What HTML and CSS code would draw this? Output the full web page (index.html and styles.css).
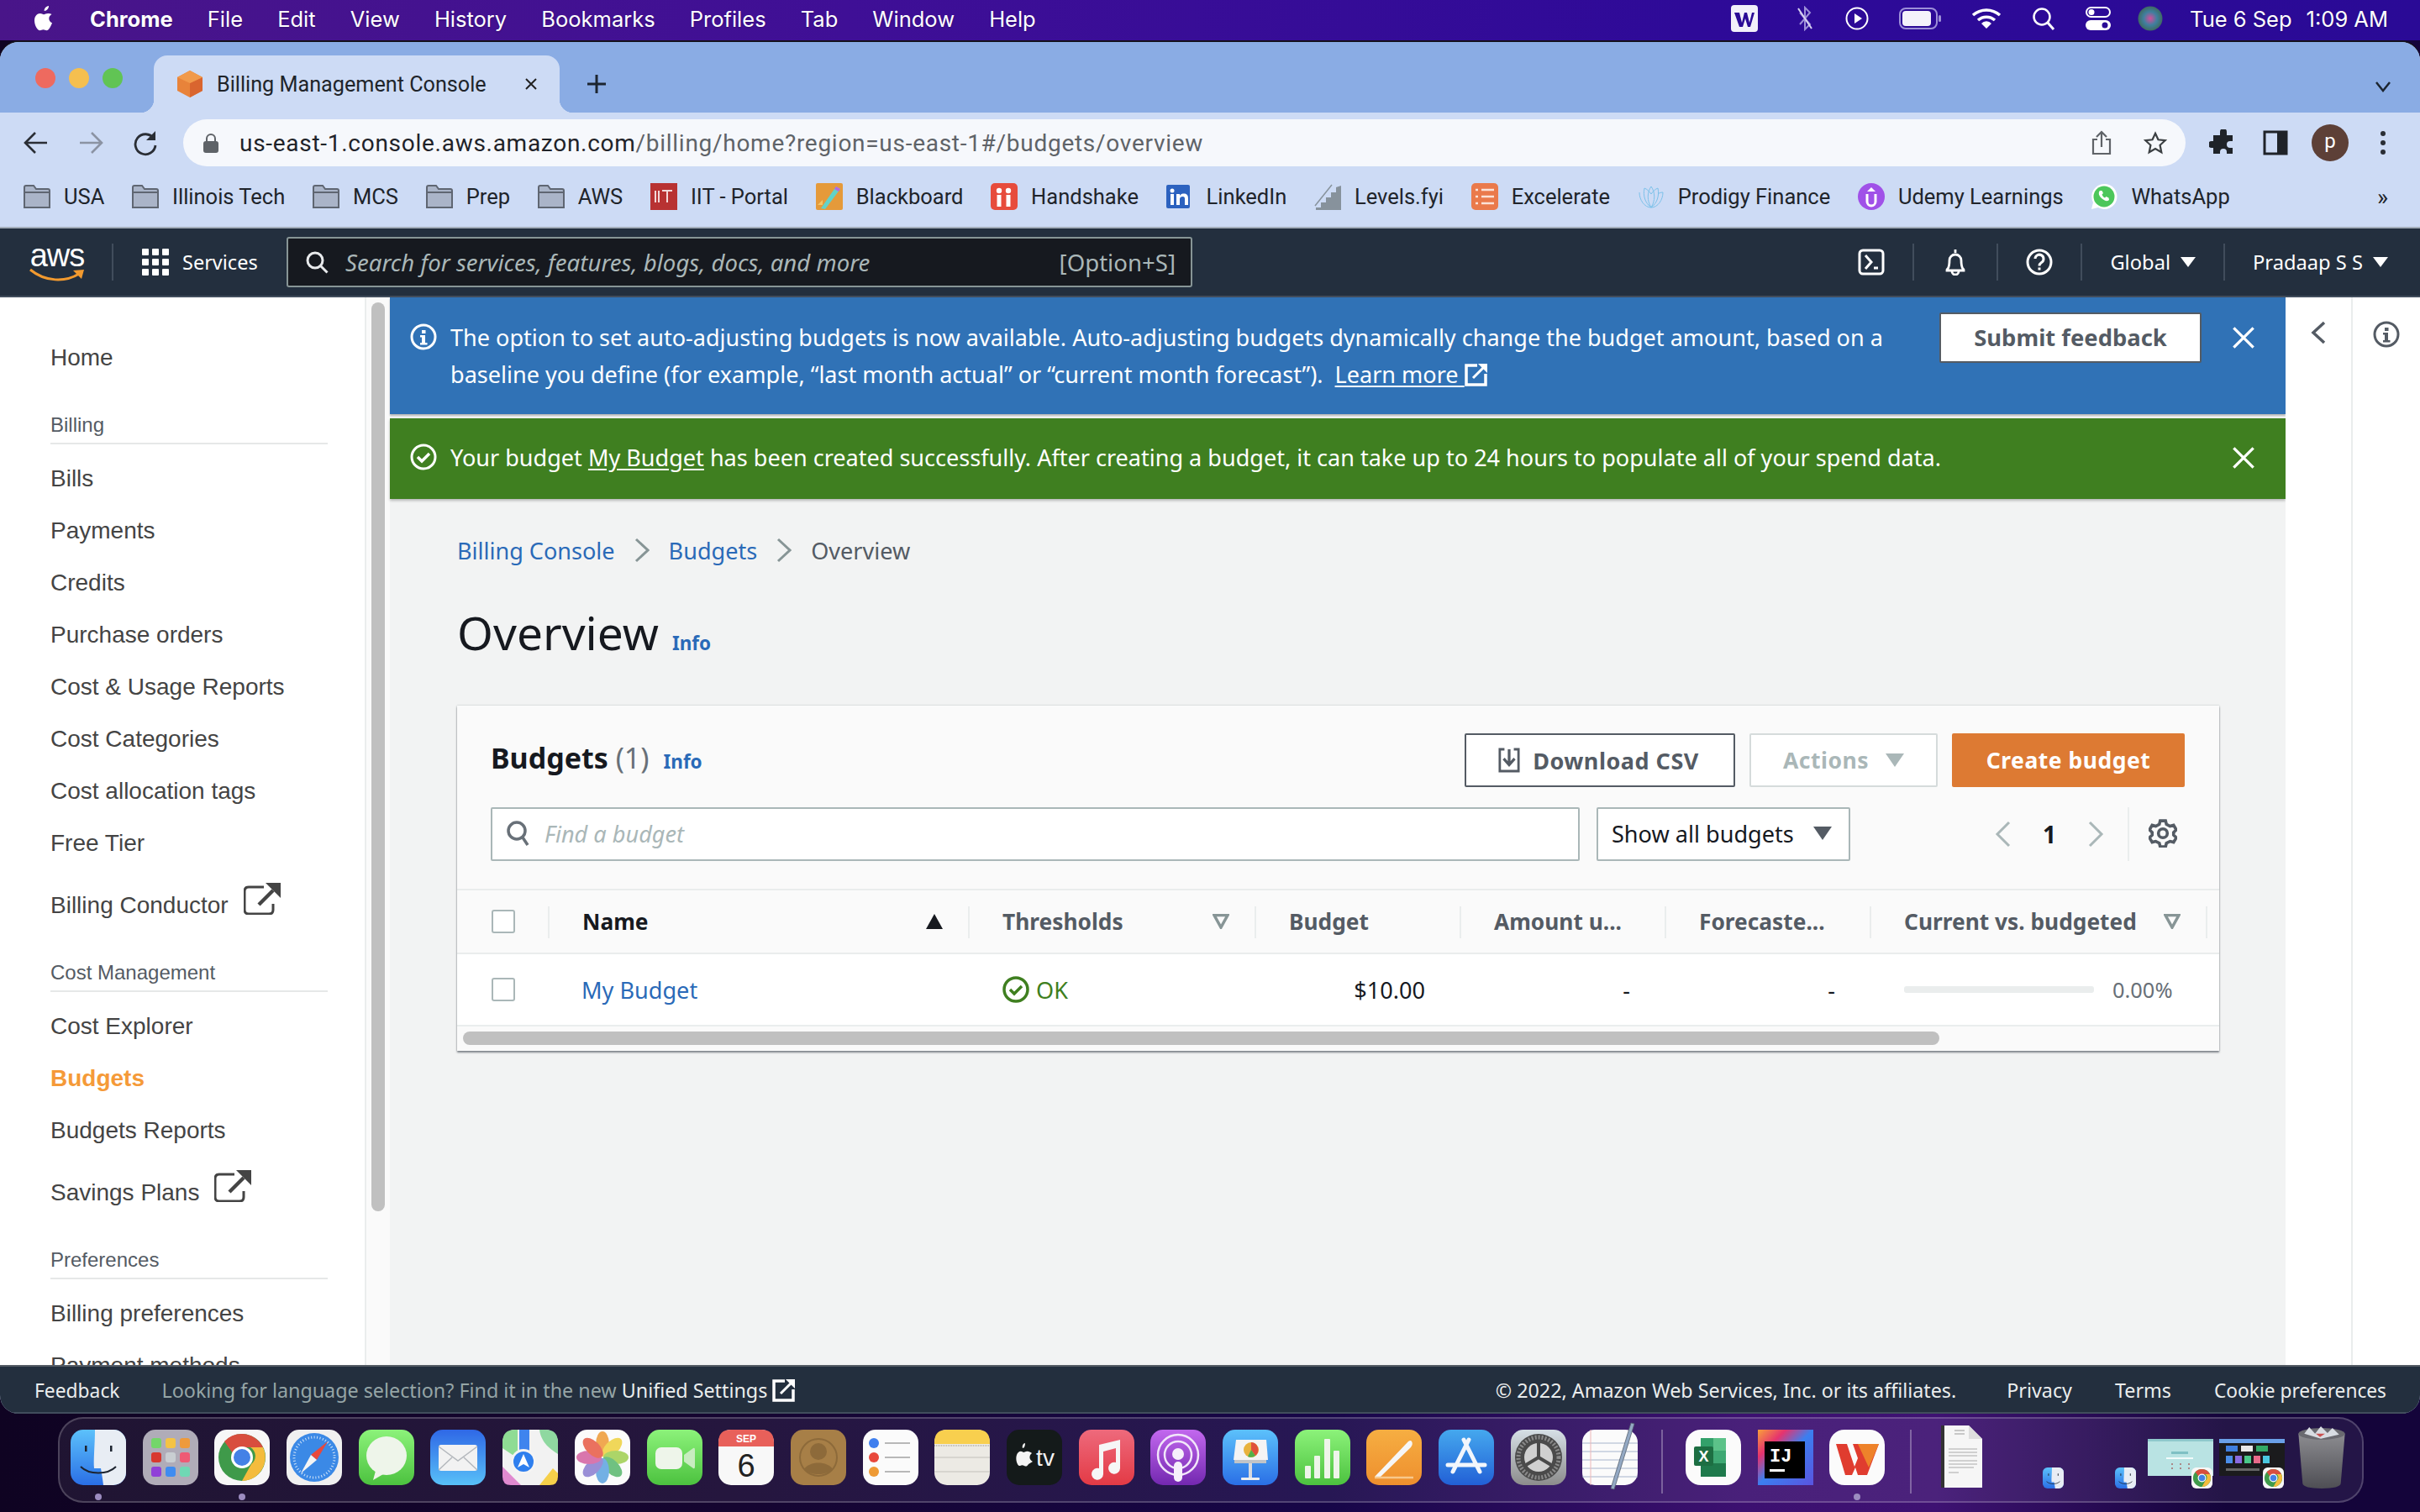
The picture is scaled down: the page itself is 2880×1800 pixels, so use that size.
FILE: index.html
```html
<!DOCTYPE html>
<html lang="en">
<head>
<meta charset="utf-8">
<title>Billing Management Console</title>
<link rel="stylesheet" href="styles.css">
</head>
<body>
<svg class="defs" aria-hidden="true">
  <defs>
    <linearGradient id="gBlue" x1="0" y1="0" x2="0" y2="1"><stop offset="0" stop-color="#5cc1fb"/><stop offset="1" stop-color="#2a6fe6"/></linearGradient>
    <linearGradient id="gGreen" x1="0" y1="0" x2="0" y2="1"><stop offset="0" stop-color="#8cf27a"/><stop offset="1" stop-color="#4cc23f"/></linearGradient>
    <linearGradient id="gMail" x1="0" y1="0" x2="0" y2="1"><stop offset="0" stop-color="#2f68e6"/><stop offset="1" stop-color="#58c0f8"/></linearGradient>
    <linearGradient id="gMusic" x1="0" y1="0" x2="0" y2="1"><stop offset="0" stop-color="#ee6a7c"/><stop offset="1" stop-color="#e33a45"/></linearGradient>
    <linearGradient id="gPod" x1="0" y1="0" x2="0" y2="1"><stop offset="0" stop-color="#c268ee"/><stop offset="1" stop-color="#7328b0"/></linearGradient>
    <linearGradient id="gPages" x1="0" y1="0" x2="0" y2="1"><stop offset="0" stop-color="#f6ae42"/><stop offset="1" stop-color="#ee8f2e"/></linearGradient>
    <linearGradient id="gStore" x1="0" y1="0" x2="0" y2="1"><stop offset="0" stop-color="#45a8ee"/><stop offset="1" stop-color="#2260d6"/></linearGradient>
    <linearGradient id="gGear" x1="0" y1="0" x2="0" y2="1"><stop offset="0" stop-color="#d6dfe6"/><stop offset="1" stop-color="#8c8c8c"/></linearGradient>
    <linearGradient id="gTrash" x1="0" y1="0" x2="0" y2="1"><stop offset="0" stop-color="#8c8c90"/><stop offset="1" stop-color="#4e4e54"/></linearGradient>
    <linearGradient id="gIj" x1="0" y1="0" x2="1" y2="1"><stop offset="0" stop-color="#f9a03a"/><stop offset=".25" stop-color="#e6336e"/><stop offset=".5" stop-color="#3b7ff0"/><stop offset="1" stop-color="#5a54e0"/></linearGradient>
    <symbol id="fold" viewBox="0 0 32 28"><path d="M1 27V3q0-2 2-2h9l3 4h14q2 0 2 2v20z" fill="#aab4c8" stroke="#5f6672" stroke-width="2"/><path d="M1 9h30" stroke="#5f6672" stroke-width="2"/></symbol>
    <symbol id="extbig" viewBox="0 0 44 38"><path d="M24 5H6q-5 0-5 5v22q0 5 5 5h24q5 0 5-5v-7" fill="none" stroke="#444" stroke-width="3"/><path d="M18 26L35 9" stroke="#444" stroke-width="4.500"/><path d="M26 0h18v18z" fill="#444"/></symbol>
    <symbol id="finder" viewBox="0 0 66 66">
      <rect width="66" height="66" rx="15" fill="url(#gBlue)"/>
      <path d="M29 0h22a15 15 0 0 1 15 15v36a15 15 0 0 1-15 15H39c-1-8-2-14-3-20h-8c-1-10 1-28 1-46z" fill="#e8edf4"/>
      <path d="M12 44c10 10 32 10 42 0" fill="none" stroke="#1d2430" stroke-width="2"/>
      <rect x="17" y="19" width="2.500" height="7" fill="#1d2430"/><rect x="47" y="19" width="2.500" height="7" fill="#1d2430"/>
    </symbol>
    <symbol id="chrome" viewBox="0 0 66 66">
      <rect width="66" height="66" rx="15" fill="#f7f7f7"/>
      <circle cx="33" cy="33" r="28" fill="#3f9a4a"/>
      <path d="M33 5a28 28 0 0 1 25 16H33a12 12 0 0 0-11 7L12 14A28 28 0 0 1 33 5z" fill="#d84e3e"/>
      <path d="M58 21a28 28 0 0 1-25 40l11-20a12 12 0 0 0-1-20z" fill="#f4bc3d"/>
      <circle cx="33" cy="33" r="13" fill="#fff"/><circle cx="33" cy="33" r="10" fill="#4481e6"/>
    </symbol>
  </defs>
</svg>

<header class="menubar">
  <nav class="menu-left">
    <svg class="apple" viewBox="0 0 26 32"><path fill="#fff" d="M18 1c.3 2.500-2.200 6-5.300 6-.4-2.700 2.400-5.800 5.300-6zM21.500 11c-2.500 1.500-3.200 3.300-3.200 5 0 2.500 1.500 4.500 3.700 5.300-1.300 4-4 9-6.500 9-1.500 0-2.300-1-4-1s-2.600 1-4 1C4.500 30.300 1 24 1 18.500 1 13 4.300 10 7.700 10c1.800 0 3.200 1.200 4.400 1.200S15 10 17 10c1.700 0 3.300.3 4.500 1z"/></svg>
    <b class="menu-app">Chrome</b>
    <span>File</span><span>Edit</span><span>View</span><span>History</span><span>Bookmarks</span><span>Profiles</span><span>Tab</span><span>Window</span><span>Help</span>
  </nav>
  <div class="status">
    <svg class="st-wps" viewBox="0 0 32 32"><rect width="32" height="32" rx="4" fill="#f2f0fa"/><path d="M4 9h6l3 12 3-12h3l3 12 3-12h3l-5 17h-3l-3-10-3 10h-4z" fill="#2a0a96"/></svg>
    <svg class="st-bt" viewBox="0 0 24 30"><path d="M6 8l12 14-6 6V2l6 6L6 22" fill="none" stroke="#9d8fd8" stroke-width="2"/><path d="M4 3l16 24" stroke="#d8d2f0" stroke-width="2"/></svg>
    <svg class="st-play" viewBox="0 0 28 28"><circle cx="14" cy="14" r="12.500" fill="none" stroke="#fff" stroke-width="2"/><path d="M11 8l9 6-9 6z" fill="#fff"/></svg>
    <svg class="st-batt" viewBox="0 0 50 26"><rect x="1" y="1" width="44" height="24" rx="7" fill="none" stroke="#9d8fd8" stroke-width="2"/><rect x="4" y="4" width="34" height="18" rx="4" fill="#f4f2fb"/><rect x="47" y="9" width="3" height="8" rx="1.500" fill="#9d8fd8"/></svg>
    <svg class="st-wifi" viewBox="0 0 36 26"><path d="M2 9a24 24 0 0 1 32 0M8 15a15 15 0 0 1 20 0" fill="none" stroke="#fff" stroke-width="3.500"/><path d="M12 19a8 8 0 0 1 12 0l-6 6z" fill="#fff"/></svg>
    <svg class="st-search" viewBox="0 0 28 28"><circle cx="12" cy="12" r="9.500" fill="none" stroke="#fff" stroke-width="2.500"/><path d="M19 19l7 8" stroke="#fff" stroke-width="3"/></svg>
    <svg class="st-ctl" viewBox="0 0 30 28"><rect x="1" y="1" width="28" height="11" rx="5.500" fill="none" stroke="#fff" stroke-width="2"/><circle cx="7" cy="6.500" r="3.500" fill="#fff"/><rect x="0" y="16" width="30" height="12" rx="6" fill="#fff"/><circle cx="23" cy="22" r="3.500" fill="#2a0a96"/></svg>
    <svg class="st-siri" viewBox="0 0 30 30"><defs><radialGradient id="gSiri"><stop offset="0" stop-color="#d44f9a"/><stop offset=".55" stop-color="#3f7f9f"/><stop offset="1" stop-color="#3f6a62"/></radialGradient></defs><circle cx="15" cy="15" r="14.500" fill="url(#gSiri)"/></svg>
    <span class="st-date">Tue 6 Sep</span><span>1:09 AM</span>
  </div>
</header>

<main class="window">
  <div class="tabstrip">
    <div class="lights"><i class="red"></i><i class="yellow"></i><i class="green"></i></div>
    <div class="tab">
      <svg class="favicon" viewBox="0 0 32 32"><path d="M16 0l15 8v16l-15 8L1 24V8z" fill="#e8833a"/><path d="M16 15l15-7v16l-15 8z" fill="#d9652f"/><path d="M16 0l15 8-15 7L1 8z" fill="#f19a4b"/></svg>
      <span class="tab-title">Billing Management Console</span>
      <svg class="tab-x" viewBox="0 0 16 16"><path d="M2 2l12 12M14 2L2 14" stroke="#222" stroke-width="2"/></svg>
    </div>
    <svg class="tab-plus" viewBox="0 0 24 24"><path d="M12 1v22M1 12h22" stroke="#1c2530" stroke-width="3"/></svg>
    <svg class="tab-down" viewBox="0 0 20 14"><path d="M2 2l8 10 8-10" fill="none" stroke="#1c2530" stroke-width="2.500"/></svg>
  </div>

  <div class="toolbar">
    <svg class="tool" viewBox="0 0 32 32"><path d="M29 16H4M15 4L3 16l12 12" fill="none" stroke="#2a2e35" stroke-width="2.600"/></svg>
    <svg class="tool" viewBox="0 0 32 32"><path d="M3 16h25M17 4l12 12-12 12" fill="none" stroke="#8b93a3" stroke-width="2.600"/></svg>
    <svg class="tool" viewBox="0 0 32 32"><path d="M26 11a12 12 0 1 0 2 8" fill="none" stroke="#2a2e35" stroke-width="2.800"/><path d="M28 2v11H17z" fill="#2a2e35"/></svg>
    <div class="address">
      <svg class="lock" viewBox="0 0 18 24"><path d="M4 11V7a5 5 0 0 1 10 0v4" fill="none" stroke="#5f6368" stroke-width="2"/><rect y="10" width="18" height="14" rx="3" fill="#5f6368"/></svg>
      <span class="url"><span class="url-host">us-east-1.console.aws.amazon.com</span>/billing/home?region=us-east-1#/budgets/overview</span>
      <svg class="addr-ic share" viewBox="0 0 24 30"><path d="M7 11H2v17h20V11h-5M12 20V2M6 8l6-6 6 6" fill="none" stroke="#5f6368" stroke-width="2.200"/></svg>
      <svg class="addr-ic" viewBox="0 0 30 30"><path d="M15 3l3.700 8 8.800 1-6.500 6 1.800 9-7.800-4.500L7.200 27 9 18l-6.500-6 8.800-1z" fill="none" stroke="#3c4043" stroke-width="2.400"/></svg>
    </div>
    <svg class="tool puzzle" viewBox="0 0 32 32"><path d="M13 3a4 4 0 0 1 8 0v4h7v7h-3a4 4 0 0 0 0 8h3v7h-7v-2a4 4 0 0 0-8 0v2H5v-7H3a4 4 0 0 1 0-8h2V7h8z" fill="#1f2329"/></svg>
    <svg class="tool panel" viewBox="0 0 32 32"><rect x="3" y="3" width="26" height="26" fill="none" stroke="#1f2329" stroke-width="3"/><rect x="18" y="3" width="11" height="26" fill="#1f2329"/></svg>
    <div class="avatar">p</div>
    <svg class="tool dots" viewBox="0 0 32 32"><circle cx="16" cy="5" r="3" fill="#2a2e35"/><circle cx="16" cy="16" r="3" fill="#2a2e35"/><circle cx="16" cy="27" r="3" fill="#2a2e35"/></svg>
  </div>

  <div class="bookmarks">
    <a class="bm"><svg class="folder" viewBox="0 0 32 28"><use href="#fold"/></svg>USA</a>
    <a class="bm"><svg class="folder" viewBox="0 0 32 28"><use href="#fold"/></svg>Illinois Tech</a>
    <a class="bm"><svg class="folder" viewBox="0 0 32 28"><use href="#fold"/></svg>MCS</a>
    <a class="bm"><svg class="folder" viewBox="0 0 32 28"><use href="#fold"/></svg>Prep</a>
    <a class="bm"><svg class="folder" viewBox="0 0 32 28"><use href="#fold"/></svg>AWS</a>
    <a class="bm"><svg class="bi" viewBox="0 0 32 32"><rect width="32" height="32" fill="#b83232"/><path d="M6 9v14M10 9v14M14 9h12M20 9v14" stroke="#f2d8d8" stroke-width="2"/></svg>IIT - Portal</a>
    <a class="bm"><svg class="bi" viewBox="0 0 32 32"><rect width="32" height="32" rx="2" fill="#e59a3a"/><path d="M6 30L24 4l5 3L11 31z" fill="#63d2c8"/><path d="M24 4l5 3-2 3-5-3z" fill="#b56ae0"/><path d="M2 26l6-6v6z" fill="#f3c566"/></svg>Blackboard</a>
    <a class="bm"><svg class="bi" viewBox="0 0 32 32"><rect width="32" height="32" rx="5" fill="#e74c3c"/><circle cx="10" cy="9" r="3.200" fill="#fff"/><circle cx="21" cy="9" r="3.200" fill="#fff"/><rect x="7.500" y="14" width="5" height="14" fill="#fff"/><rect x="18.500" y="14" width="5" height="14" fill="#fff"/></svg>Handshake</a>
    <a class="bm"><svg class="bi" viewBox="0 0 32 32"><rect width="28" height="28" y="2" rx="2" fill="#2c62bf"/><rect x="5" y="13" width="4" height="13" fill="#fff"/><circle cx="7" cy="9" r="2.500" fill="#fff"/><path d="M12 13h4v2c1-2 3-2.500 5-2.500 4 0 5 2.500 5 6V26h-4v-7c0-2-.5-3-2.500-3S16 17 16 19v7h-4z" fill="#fff"/></svg>LinkedIn</a>
    <a class="bm"><svg class="bi" viewBox="0 0 32 32"><path d="M21 2L1 27" stroke="#87929c" stroke-width="1.500"/><path d="M32 3v29H2v-3h6v-6h6v-6h6v-6h6V5z" fill="#87929c"/></svg>Levels.fyi</a>
    <a class="bm"><svg class="bi" viewBox="0 0 32 32"><rect width="32" height="32" rx="5" fill="#ea7a4b"/><path d="M5 8h3M12 8h15M5 16h3M12 16h15M5 24h3M12 24h15" stroke="#fbe3d8" stroke-width="2.500"/></svg>Excelerate</a>
    <a class="bm"><svg class="bi" viewBox="0 0 32 32" fill="none" stroke="#7cc1ea" stroke-width="1"><path d="M16 4c-5 7-5 17 0 25 5-8 5-18 0-25zM8 6c-2 9 1 18 8 23 7-5 10-14 8-23-3 1-6 4-8 7-2-3-5-6-8-7zM2 11c0 9 6 18 14 18s14-9 14-18c-3 0-5 1-6 2"/></svg>Prodigy Finance</a>
    <a class="bm"><svg class="bi" viewBox="0 0 32 32"><circle cx="16" cy="16" r="16" fill="#a051e8"/><path d="M11 13v9a5 5 0 0 0 10 0v-9" fill="none" stroke="#fff" stroke-width="3"/><path d="M16 5l5 5H11z" fill="#fff"/></svg>Udemy Learnings</a>
    <a class="bm"><svg class="bi" viewBox="0 0 32 32"><path d="M16 1a15 15 0 0 0-13 22L1 31l8-2A15 15 0 1 0 16 1z" fill="#fff"/><circle cx="16" cy="16" r="12.500" fill="#4cc75b"/><path d="M11 9c-2 2-1.500 6 2 9s6.500 4.500 9 2l-.5-2.500-3-1.500-1.500 1.500c-2-1-3-2.500-3.500-4l1.500-1.500L13.500 9z" fill="#fff"/></svg>WhatsApp</a>
    <span class="bm-more">»</span>
  </div>

  <div class="awsnav">
    <div class="aws-logo"><span class="aws-word">aws</span>
      <svg class="aws-smile" viewBox="0 0 66 16"><path d="M1 2c18 15 42 15 58 5" fill="none" stroke="#f29a2f" stroke-width="3"/><path d="M52 3l13-1-3 11z" fill="#f29a2f"/></svg>
    </div>
    <i class="nav-sep"></i>
    <div class="services">
      <svg class="grid9" viewBox="0 0 32 32"><g fill="#fff"><rect width="8" height="8" rx="1"/><rect x="12" width="8" height="8" rx="1"/><rect x="24" width="8" height="8" rx="1"/><rect y="12" width="8" height="8" rx="1"/><rect x="12" y="12" width="8" height="8" rx="1"/><rect x="24" y="12" width="8" height="8" rx="1"/><rect y="24" width="8" height="8" rx="1"/><rect x="12" y="24" width="8" height="8" rx="1"/><rect x="24" y="24" width="8" height="8" rx="1"/></g></svg>
      <span>Services</span>
    </div>
    <div class="aws-search">
      <svg class="aws-search-ic" viewBox="0 0 28 28"><circle cx="12" cy="12" r="9" fill="none" stroke="#e8eaec" stroke-width="3"/><path d="M18.500 18.500l8 8" stroke="#e8eaec" stroke-width="3"/></svg>
      <em>Search for services, features, blogs, docs, and more</em>
      <span class="aws-short">[Option+S]</span>
    </div>
    <div class="aws-right">
      <svg class="nav-ic" viewBox="0 0 32 32"><rect x="2" y="2" width="28" height="28" rx="4" fill="none" stroke="#fff" stroke-width="3"/><path d="M9 8l7 8-7 8M19 23h5" fill="none" stroke="#fff" stroke-width="3"/></svg>
      <i class="nav-sep"></i>
      <svg class="nav-ic" viewBox="0 0 32 32"><path d="M16 1v4M7 24c2-3 2-5 2-10a7 7 0 0 1 14 0c0 5 0 7 2 10 0 0 1 .500 1 1v1H6v-1c0-.500 1-1 1-1zM12 27a4 4 0 0 0 8 0" fill="none" stroke="#fff" stroke-width="2.800"/></svg>
      <i class="nav-sep"></i>
      <svg class="nav-ic" viewBox="0 0 32 32"><circle cx="16" cy="16" r="14" fill="none" stroke="#fff" stroke-width="3"/><path d="M11 12a5 5 0 1 1 7.500 4.500c-1.500 1-2.500 2-2.500 4" fill="none" stroke="#fff" stroke-width="3"/><rect x="14.500" y="22.500" width="3" height="3" fill="#fff"/></svg>
      <i class="nav-sep"></i>
      <span class="nav-menu nav-global">Global<i class="caret-w"></i></span>
      <i class="nav-sep"></i>
      <span class="nav-menu nav-user">Pradaap S S<i class="caret-w"></i></span>
    </div>
  </div>

  <div class="body-row">
    <aside class="sidebar">
      <a class="nav-item">Home</a>
      <div class="nav-section">Billing</div>
      <a class="nav-item">Bills</a>
      <a class="nav-item">Payments</a>
      <a class="nav-item">Credits</a>
      <a class="nav-item">Purchase orders</a>
      <a class="nav-item">Cost &amp; Usage Reports</a>
      <a class="nav-item">Cost Categories</a>
      <a class="nav-item">Cost allocation tags</a>
      <a class="nav-item">Free Tier</a>
      <a class="nav-item nav-ext">Billing Conductor <svg class="ext-big" viewBox="0 0 44 38"><use href="#extbig"/></svg></a>
      <div class="nav-section">Cost Management</div>
      <a class="nav-item">Cost Explorer</a>
      <a class="nav-item nav-active">Budgets</a>
      <a class="nav-item">Budgets Reports</a>
      <a class="nav-item nav-ext">Savings Plans <svg class="ext-big" viewBox="0 0 44 38"><use href="#extbig"/></svg></a>
      <div class="nav-section">Preferences</div>
      <a class="nav-item">Billing preferences</a>
      <a class="nav-item">Payment methods</a>
    </aside>
    <div class="side-scroll"><div class="side-thumb"></div></div>

    <section class="content">
      <div class="flash flash-info">
        <svg class="flash-ic" viewBox="0 0 32 32"><circle cx="16" cy="16" r="14" fill="none" stroke="#fff" stroke-width="3"/><rect x="14" y="8" width="4.500" height="4" fill="#fff"/><path d="M12 14h6v9h2.500v2.500h-8.500V23H14v-6.500h-2z" fill="#fff"/></svg>
        <p class="flash-text">The option to set auto-adjusting budgets is now available. Auto-adjusting budgets dynamically change the budget amount, based on a<br>baseline you define (for example, “last month actual” or “current month forecast”). <u class="learn">Learn more </u><svg class="ext-small" viewBox="0 0 28 28"><path d="M15 3H2v23h23V13" fill="none" stroke="#fff" stroke-width="3.500"/><path d="M10 18L22 6" stroke="#fff" stroke-width="3"/><path d="M16 1h11v11z" fill="#fff"/></svg></p>
        <button class="btn-feedback">Submit feedback</button>
        <svg class="flash-x" viewBox="0 0 24 24"><path d="M2 2l20 20M22 2L2 22" stroke="#fff" stroke-width="2.800"/></svg>
      </div>
      <div class="flash flash-ok">
        <svg class="flash-ic" viewBox="0 0 32 32"><circle cx="16" cy="16" r="14" fill="none" stroke="#fff" stroke-width="3"/><path d="M9 16l5 5 9-9" fill="none" stroke="#fff" stroke-width="3.500"/></svg>
        <p class="flash-text">Your budget <u>My Budget</u> has been created successfully. After creating a budget, it can take up to 24 hours to populate all of your spend data.</p>
        <svg class="flash-x" viewBox="0 0 24 24"><path d="M2 2l20 20M22 2L2 22" stroke="#fff" stroke-width="2.800"/></svg>
      </div>

      <div class="page">
        <nav class="crumbs">
          <a>Billing Console</a>
          <svg class="crumb-sep" viewBox="0 0 18 30"><path d="M2 2l14 13L2 28" fill="none" stroke="#879596" stroke-width="3"/></svg>
          <a>Budgets</a>
          <svg class="crumb-sep" viewBox="0 0 18 30"><path d="M2 2l14 13L2 28" fill="none" stroke="#879596" stroke-width="3"/></svg>
          <span>Overview</span>
        </nav>
        <div class="title-row"><h1>Overview</h1><a class="info">Info</a></div>

        <div class="card">
          <div class="card-head">
            <h2>Budgets <span class="count">(1)</span></h2><a class="info">Info</a>
            <div class="actions">
              <button class="btn btn-normal"><svg class="dl" viewBox="0 0 28 32"><path d="M8 2H2v28h24V2h-6" fill="none" stroke="#545b64" stroke-width="3"/><path d="M14 2v18M7 14l7 8 7-8" fill="none" stroke="#545b64" stroke-width="3.500"/></svg>Download CSV</button>
              <button class="btn btn-disabled">Actions<i class="caret caret-dis"></i></button>
              <button class="btn btn-primary">Create budget</button>
            </div>
          </div>
          <div class="card-filter">
            <div class="find"><svg class="find-ic" viewBox="0 0 28 32"><circle cx="13" cy="13" r="10" fill="none" stroke="#687078" stroke-width="3.500"/><path d="M20 21l6 9" stroke="#687078" stroke-width="3.500"/></svg><em>Find a budget</em></div>
            <div class="select">Show all budgets<i class="caret caret-dark"></i></div>
            <div class="pager">
              <svg class="pg" viewBox="0 0 20 32"><path d="M17 2L3 16l14 14" fill="none" stroke="#aab7b8" stroke-width="3"/></svg>
              <b>1</b>
              <svg class="pg" viewBox="0 0 20 32"><path d="M3 2l14 14L3 30" fill="none" stroke="#aab7b8" stroke-width="3"/></svg>
            </div>
            <div class="prefs"><svg class="gear" viewBox="0 0 32 32"><path d="M13 2h6l1 4 4 2 4-1 3 5-3 3v3l3 3-3 5-4-1-4 2-1 4h-6l-1-4-4-2-4 1-3-5 3-3v-3L1 12l3-5 4 1 4-2z" fill="none" stroke="#545b64" stroke-width="3.400"/><circle cx="16" cy="16" r="5" fill="none" stroke="#545b64" stroke-width="3.400"/></svg></div>
          </div>
          <div class="table">
            <div class="tr th">
              <div class="cell"><i class="check"></i></div>
              <div class="cell sep name-h">Name<svg class="sort" viewBox="0 0 20 18"><path d="M10 0l10 18H0z" fill="#16191f"/></svg></div>
              <div class="cell sep">Thresholds<svg class="sort" viewBox="0 0 20 18"><path d="M2 1.500h16L10 16z" fill="none" stroke="#879596" stroke-width="3.500"/></svg></div>
              <div class="cell sep">Budget</div>
              <div class="cell sep">Amount u...</div>
              <div class="cell sep">Forecaste...</div>
              <div class="cell sep">Current vs. budgeted<svg class="sort" viewBox="0 0 20 18"><path d="M2 1.500h16L10 16z" fill="none" stroke="#879596" stroke-width="3.500"/></svg></div>
              <div class="cell sep cell-end"></div>
            </div>
            <div class="tr td">
              <div class="cell"><i class="check"></i></div>
              <div class="cell"><a class="link">My Budget</a></div>
              <div class="cell ok"><svg class="ok-ic" viewBox="0 0 32 32"><circle cx="16" cy="16" r="14" fill="none" stroke="#3f7f20" stroke-width="3.500"/><path d="M9 16l5 5 9-9" fill="none" stroke="#3f7f20" stroke-width="3.500"/></svg>OK</div>
              <div class="cell num">$10.00</div>
              <div class="cell num">-</div>
              <div class="cell num">-</div>
              <div class="cell prog"><i class="bar"></i><span>0.00%</span></div>
              <div class="cell cell-end"></div>
            </div>
          </div>
          <div class="hscroll"><div class="hthumb"></div></div>
        </div>
      </div>
    </section>

    <aside class="rail">
      <div class="rail-col rail-left"><svg class="rail-chev" viewBox="0 0 20 28"><path d="M17 2L4 14l13 12" fill="none" stroke="#545b64" stroke-width="3.500"/></svg></div>
      <div class="rail-col"><svg class="rail-info" viewBox="0 0 32 32"><circle cx="16" cy="16" r="14" fill="none" stroke="#545b64" stroke-width="3"/><rect x="14" y="8" width="4.500" height="4" fill="#545b64"/><path d="M12 14h6v9h2.500v2.500h-8.500V23H14v-6.500h-2z" fill="#545b64"/></svg></div>
    </aside>
  </div>

  <footer class="footer">
    <a class="foot-white foot-feedback">Feedback</a>
    <span class="foot-grey">Looking for language selection? Find it in the new <span class="foot-white">Unified Settings</span></span>
    <svg class="ext-foot" viewBox="0 0 28 28"><path d="M15 3H2v23h23V13" fill="none" stroke="#fff" stroke-width="3.500"/><path d="M10 18L22 6" stroke="#fff" stroke-width="3"/><path d="M16 1h11v11z" fill="#fff"/></svg>
    <span class="foot-white foot-copy">© 2022, Amazon Web Services, Inc. or its affiliates.</span>
    <a class="foot-white foot-privacy">Privacy</a>
    <a class="foot-white foot-terms">Terms</a>
    <a class="foot-white foot-cookie">Cookie preferences</a>
  </footer>
</main>

<div class="dock-wrap">
  <div class="dock">
    <div class="dk"><svg viewBox="0 0 66 66"><use href="#finder"/></svg><i class="run"></i></div>
    <div class="dk"><svg viewBox="0 0 66 66"><rect width="66" height="66" rx="15" fill="#b0acb8"/><g><rect x="10" y="10" width="12" height="12" rx="3" fill="#74d66a"/><rect x="27" y="10" width="12" height="12" rx="3" fill="#f4c344"/><rect x="44" y="10" width="12" height="12" rx="3" fill="#ee9a3c"/><rect x="10" y="27" width="12" height="12" rx="3" fill="#d8392f"/><rect x="27" y="27" width="12" height="12" rx="3" fill="#c9ced2"/><rect x="44" y="27" width="12" height="12" rx="3" fill="#ee5a74"/><rect x="10" y="44" width="12" height="12" rx="3" fill="#9040d8"/><rect x="27" y="44" width="12" height="12" rx="3" fill="#3f8cf0"/><rect x="44" y="44" width="12" height="12" rx="3" fill="#6fd8b4"/></g></svg></div>
    <div class="dk"><svg viewBox="0 0 66 66"><use href="#chrome"/></svg><i class="run"></i></div>
    <div class="dk"><svg viewBox="0 0 66 66"><rect width="66" height="66" rx="15" fill="#f0f0f0"/><circle cx="33" cy="33" r="29" fill="#3b89e6"/><circle cx="33" cy="33" r="24" fill="none" stroke="#cfe3f8" stroke-width="3" stroke-dasharray="1 2.500"/><path d="M49 14L29 30l7 6z" fill="#e8483c"/><path d="M17 52l12-22 7 6z" fill="#f4f4f4"/></svg></div>
    <div class="dk"><svg viewBox="0 0 66 66"><rect width="66" height="66" rx="15" fill="url(#gGreen)"/><ellipse cx="33" cy="31" rx="24" ry="23" fill="#eef5ea"/><path d="M20 49l-3 11 12-7z" fill="#eef5ea"/></svg></div>
    <div class="dk"><svg viewBox="0 0 66 66"><rect width="66" height="66" rx="15" fill="url(#gMail)"/><rect x="10" y="18" width="46" height="31" rx="3" fill="#f2f2f2"/><path d="M10 20l23 17 23-17M10 48l16-15M56 48L40 33" fill="none" stroke="#b4b8bd" stroke-width="1.500"/></svg></div>
    <div class="dk"><svg viewBox="0 0 66 66"><rect width="66" height="66" rx="15" fill="#f2f2f2"/><path d="M0 44l22 22H10Q0 66 0 56z" fill="#e08ad0"/><path d="M44 66l16-20 6 6v4q0 10-10 10z" fill="#f6d04a"/><path d="M20 0h12v30H20z" fill="#3f84ee"/><path d="M44 0h7q15 0 15 15v14C58 24 46 16 44 0z" fill="#8fd8a0"/><path d="M0 15Q0 0 15 0h3v34L0 22z" fill="#8fdc94"/><circle cx="25" cy="38" r="15" fill="#f4f4f4"/><circle cx="25" cy="38" r="12" fill="#2f7fee"/><path d="M25 29l7 16-7-4-7 4z" fill="#fff"/></svg></div>
    <div class="dk"><svg viewBox="0 0 66 66"><rect width="66" height="66" rx="15" fill="#fbfbfb"/><g transform="translate(33 33)" opacity=".85"><ellipse cy="-16" rx="8" ry="15" fill="#ef9a35"/><ellipse cy="-16" rx="8" ry="15" fill="#efd13f" transform="rotate(45)"/><ellipse cy="-16" rx="8" ry="15" fill="#9fcf4f" transform="rotate(90)"/><ellipse cy="-16" rx="8" ry="15" fill="#58b86c" transform="rotate(135)"/><ellipse cy="-16" rx="8" ry="15" fill="#5ca3e0" transform="rotate(180)"/><ellipse cy="-16" rx="8" ry="15" fill="#8a7dd0" transform="rotate(225)"/><ellipse cy="-16" rx="8" ry="15" fill="#d45fa0" transform="rotate(270)"/><ellipse cy="-16" rx="8" ry="15" fill="#e85a44" transform="rotate(315)"/></g></svg></div>
    <div class="dk"><svg viewBox="0 0 66 66"><rect width="66" height="66" rx="15" fill="url(#gGreen)"/><rect x="10" y="21" width="32" height="26" rx="7" fill="#eef5ea"/><path d="M44 30l11-8q2-1 2 2v20q0 3-2 2l-11-8z" fill="#c8ecc0"/></svg></div>
    <div class="dk"><svg viewBox="0 0 66 66"><rect width="66" height="66" rx="15" fill="#f8f8f8"/><path d="M0 20V15Q0 0 15 0h36q15 0 15 15v5z" fill="#e8605a"/><text class="t-sep" x="33" y="15" text-anchor="middle">SEP</text><text class="t-six" x="33" y="56" text-anchor="middle">6</text></svg></div>
    <div class="dk"><svg viewBox="0 0 66 66"><rect width="66" height="66" rx="15" fill="#a77f47"/><circle cx="33" cy="33" r="22" fill="none" stroke="#8d6a3a" stroke-width="2"/><circle cx="33" cy="26" r="10" fill="#8d6a3a"/><path d="M16 47c6-10 28-10 34 0-8 8-26 8-34 0z" fill="#8d6a3a"/></svg></div>
    <div class="dk"><svg viewBox="0 0 66 66"><rect width="66" height="66" rx="15" fill="#fbfbfb"/><circle cx="13" cy="16" r="6" fill="#3f7fee"/><circle cx="13" cy="33" r="6" fill="#e8483c"/><circle cx="13" cy="50" r="6" fill="#ee9a35"/><path d="M26 16h30M26 33h30M26 50h30" stroke="#b8b8b8" stroke-width="2"/></svg></div>
    <div class="dk"><svg viewBox="0 0 66 66"><rect width="66" height="66" rx="15" fill="#eceae4"/><path d="M0 17V15Q0 0 15 0h36q15 0 15 15v2z" fill="#f8cf4e"/><path d="M0 33h66M0 50h66" stroke="#d0cec8" stroke-width="1.500"/><path d="M0 19h66" stroke="#bdbbb5" stroke-width="2" stroke-dasharray="1 1"/></svg></div>
    <div class="dk"><svg viewBox="0 0 66 66"><rect width="66" height="66" rx="15" fill="#141a1a"/><path d="M23 22c-1-3 1-6 3-6 0 3-1 6-3 6zM30 41c-2 3-3 3-5 2-2-1-3-1-5 0-4 1-7-12-2-16 2-2 4-1 6 0 1 0 3-2 6-1 1 0 3 1 4 2-4 3-3 8 1 10z" fill="#f4f4f4" transform="translate(-4 0)"/><text class="t-tv" x="46" y="43" text-anchor="middle">tv</text></svg></div>
    <div class="dk"><svg viewBox="0 0 66 66"><rect width="66" height="66" rx="15" fill="url(#gMusic)"/><path d="M24 18l25-6v34a7 7 0 1 1-5-7V22l-15 4v27a7 7 0 1 1-5-7z" fill="#f6f6f6"/></svg></div>
    <div class="dk"><svg viewBox="0 0 66 66"><rect width="66" height="66" rx="15" fill="url(#gPod)"/><circle cx="33" cy="30" r="24" fill="none" stroke="#f2e6fa" stroke-width="2.500"/><circle cx="33" cy="30" r="16" fill="none" stroke="#f2e6fa" stroke-width="2.500"/><circle cx="33" cy="29" r="7" fill="#f6f0fb"/><rect x="28" y="38" width="10" height="24" rx="5" fill="#f6f0fb"/></svg></div>
    <div class="dk"><svg viewBox="0 0 66 66"><rect width="66" height="66" rx="15" fill="url(#gBlue)"/><path d="M16 12h36l2 24H13z" fill="#f4f4f4"/><path d="M14 36h38v4H14z" fill="#c0c4c8"/><rect x="31" y="40" width="4" height="18" fill="#d8dade"/><rect x="22" y="57" width="22" height="3" rx="1" fill="#eceef0"/><circle cx="34" cy="24" r="9" fill="#e8b23c"/><path d="M34 24V15a9 9 0 0 1 5 16z" fill="#e0503c"/><path d="M34 24l5 7a9 9 0 0 1-9 1z" fill="#52b04a"/></svg></div>
    <div class="dk"><svg viewBox="0 0 66 66"><rect width="66" height="66" rx="15" fill="url(#gGreen)"/><g fill="#eef5ea"><rect x="12" y="43" width="7" height="15" rx="1"/><rect x="23" y="31" width="7" height="27" rx="1"/><rect x="35" y="11" width="7" height="47" rx="1"/><rect x="46" y="25" width="7" height="33" rx="1"/></g></svg></div>
    <div class="dk"><svg viewBox="0 0 66 66"><rect width="66" height="66" rx="15" fill="url(#gPages)"/><path d="M10 56L50 14q3-2 4 0 2 3-1 7L17 56z" fill="#f6f6f6"/><path d="M10 57h46" stroke="#f8c88a" stroke-width="2.500"/></svg></div>
    <div class="dk"><svg viewBox="0 0 66 66"><rect width="66" height="66" rx="15" fill="url(#gStore)"/><path d="M36 12L17 50M30 12l19 38M11 42h44" fill="none" stroke="#f2f6fc" stroke-width="5" stroke-linecap="round"/></svg></div>
    <div class="dk"><svg viewBox="0 0 66 66"><rect width="66" height="66" rx="15" fill="url(#gGear)"/><circle cx="33" cy="33" r="28" fill="#4a4a4a"/><circle cx="33" cy="33" r="24" fill="none" stroke="#8a8a8a" stroke-width="5" stroke-dasharray="2 2"/><circle cx="33" cy="33" r="17" fill="#d0d0d0"/><path d="M33 33V16M33 33L18 42M33 33l15 9" stroke="#4a4a4a" stroke-width="4"/></svg></div>
    <div class="dk"><svg viewBox="0 0 66 66"><rect width="66" height="66" rx="15" fill="#fbfbfb"/><path d="M0 16h66M0 26h66M0 36h66M0 46h66M0 56h66" stroke="#a6b4cc" stroke-width="1"/><path d="M10 0v66" stroke="#eeb8b8"/><path d="M34 70L58-8l4 1-24 78z" fill="#94a9c4" stroke="#55616e" stroke-width=".8"/></svg></div>
    <i class="dk-sep"></i>
    <div class="dk"><svg viewBox="0 0 66 66"><rect width="66" height="66" rx="18" fill="#fbfbfb"/><path d="M18 10h27a3 3 0 0 1 3 3v40a3 3 0 0 1-3 3H18z" fill="#33a06a"/><path d="M33 10h15v15H33z" fill="#5cc289"/><path d="M33 25h15v15H33z" fill="#3ea873"/><path d="M18 40h30v16H18z" fill="#1f7a4c"/><rect x="10" y="20" width="23" height="23" rx="2" fill="#1d6e42"/><text class="t-x" x="21.500" y="38" text-anchor="middle">X</text></svg></div>
    <div class="dk"><svg viewBox="0 0 66 66"><rect width="66" height="66" fill="url(#gIj)"/><rect x="8" y="14" width="48" height="44" fill="#000"/><text class="t-ij" x="14" y="38">IJ</text><rect x="14" y="47" width="18" height="3" fill="#fff"/></svg></div>
    <div class="dk"><svg viewBox="0 0 66 66"><rect width="66" height="66" rx="18" fill="#fbfbfb"/><path d="M8 17h13l9 27 4-10-6-17h31L45 54H34l-3-9-4 9H19z" fill="#e03c2f"/><path d="M34 17h25L47 45z" fill="#f08a2a" opacity=".9"/></svg><i class="run"></i></div>
    <i class="dk-sep dk-sep2"></i>
    <div class="dk dk-doc"><svg viewBox="0 0 49 78"><path d="M3 2h30l16 16v58H3z" fill="#f6f6f6"/><rect x="0" y="2" width="4" height="74" fill="#333"/><path d="M33 2v16h16z" fill="#dedede"/><path d="M9 30h34M9 34h34M9 38h34M9 44h34M9 48h34M9 52h30M9 58h12" stroke="#aaa" stroke-width="1"/><path d="M16 8h12M16 12h12" stroke="#999"/></svg></div>
    <div class="dk dk-mini"><svg viewBox="0 0 66 66"><use href="#finder"/></svg></div>
    <div class="dk dk-mini dk-mini2"><svg viewBox="0 0 66 66"><use href="#finder"/></svg></div>
    <div class="dk dk-shot">
      <svg viewBox="0 0 78 44" preserveAspectRatio="none"><rect width="78" height="44" fill="#b9e3e3"/><rect width="78" height="3" fill="#8fc9cc"/><rect x="28" y="15" width="20" height="3" fill="#7fc0c4"/><rect x="22" y="22" width="32" height="2" fill="#f2fbfb"/><path d="M28 30h2M38 30h2M48 30h2M28 35h2M38 35h2M48 35h2" stroke="#a88" stroke-width="2"/></svg>
      <svg class="shot-badge" viewBox="0 0 66 66"><use href="#chrome"/></svg>
    </div>
    <div class="dk dk-shot">
      <svg viewBox="0 0 78 44" preserveAspectRatio="none"><rect width="78" height="44" fill="#1b1b1d"/><rect width="78" height="5" fill="#6aa0e8"/><rect x="8" y="8" width="14" height="7" fill="#3f7fe0"/><rect x="26" y="8" width="14" height="7" fill="#e8e8e8"/><rect x="44" y="8" width="14" height="7" fill="#3a6"/><rect x="8" y="20" width="8" height="9" fill="#4a8ee8"/><rect x="19" y="20" width="8" height="9" fill="#8a6ae0"/><rect x="30" y="20" width="8" height="9" fill="#4ac88a"/><rect x="41" y="20" width="8" height="9" fill="#e86a8a"/><rect x="52" y="20" width="8" height="9" fill="#4ac8e0"/><rect x="8" y="35" width="40" height="3" fill="#666"/></svg>
      <svg class="shot-badge" viewBox="0 0 66 66"><use href="#chrome"/></svg>
    </div>
    <div class="dk dk-trash"><svg viewBox="0 0 58 76"><path d="M1 10h56l-5 60q-1 6-23 6T6 70z" fill="url(#gTrash)"/><ellipse cx="29" cy="10" rx="28" ry="7" fill="#6a6a70"/><path d="M8 10L14 2l7 8 7-9 8 8 6-6 8 8-22 5z" fill="#d8dce2"/><path d="M22 10l5 4 6-4" fill="#c85050"/></svg></div>
  </div>
</div>
</body>
</html>
```

FILE: styles.css
```css
* { box-sizing: border-box; }
html, body { margin: 0; padding: 0; }
body {
  width: 2880px; height: 1800px; overflow: hidden;
  display: flex; flex-direction: column;
  font-family: "Noto Sans", sans-serif;
  background: linear-gradient(90deg, #0f0322 0%, #150530 30%, #170648 55%, #3c1070 72%, #3e1272 80%, #14043a 92%, #14043a 100%);
}
a { text-decoration: none; }
i { display: block; font-style: normal; }
svg { display: block; flex: none; }
p, h1, h2 { margin: 0; }
button { font-family: inherit; }
.defs { width: 0; height: 0; position: absolute; }

/* mac menu bar */
.menubar {
  height: 48px; flex: none; display: flex; align-items: center; justify-content: space-between;
  background: linear-gradient(90deg, #491589 0%, #3f0f96 35%, #2e0a98 70%, #2a0a96 100%);
  color: #fff; font-family: Inter, sans-serif; font-size: 25.500px; padding: 0 38px 4px 40px;
  text-shadow: 0 1px 2px rgba(0,0,0,.25);
}
.menu-left { display: flex; align-items: center; gap: 41.100px; }
.menu-left .apple { width: 26px; height: 32px; margin-right: 0; }
.menu-app { font-weight: 700; }
.status { display: flex; align-items: center; gap: 36px; }
.st-wps { width: 32px; height: 32px; margin-right: 8px; }
.st-bt { width: 24px; height: 30px; }
.st-play { width: 28px; height: 28px; }
.st-batt { width: 50px; height: 26px; }
.st-wifi { width: 36px; height: 26px; }
.st-search { width: 28px; height: 28px; }
.st-ctl { width: 30px; height: 28px; }
.st-siri { width: 30px; height: 30px; margin-left: -4px; }
.st-date { margin-right: -19px; margin-left: -4px; }

/* chrome window */
.window {
  height: 1633px; flex: none; display: flex; flex-direction: column; overflow: hidden;
  margin-top: 2px; border-radius: 22px; background: #cddbf5;
  box-shadow: 0 -2px 0 #14101c;
}
.tabstrip {
  height: 84px; flex: none; display: flex; padding: 16px 0 0 42px; background: #8aace4;
}
.lights { display: flex; gap: 16px; padding-top: 15px; width: 141px; }
.lights i { width: 24px; height: 24px; border-radius: 50%; }
.lights .red { background: #ee6a5f; }
.lights .yellow { background: #f5bf4f; }
.lights .green { background: #61c454; }
.tab {
  position: relative;
  width: 483px; height: 68px; display: flex; align-items: center; padding: 0 26px 0 27px;
  background: #cddbf5; border-radius: 16px 16px 0 0; font-family: Roboto, sans-serif; font-size: 25.200px; color: #20242a;
}
.tab::before, .tab::after { content: ""; position: absolute; bottom: 0; width: 16px; height: 16px; }
.tab::before { left: -16px; background: radial-gradient(circle at 0 0, #8aace4 16px, #cddbf5 16.500px); }
.tab::after { right: -16px; background: radial-gradient(circle at 100% 0, #8aace4 16px, #cddbf5 16.500px); }
.favicon { width: 32px; height: 32px; margin-right: 16px; }
.tab-title { flex: 1; white-space: nowrap; }
.tab-x { width: 16px; height: 16px; }
.tab-plus { width: 24px; height: 24px; margin: 22px 0 0 32px; }
.tab-down { width: 20px; height: 14px; margin: 30px 34px 0 auto; }

.toolbar {
  height: 72px; flex: none; display: flex; padding: 8px 0 0 27px; gap: 33px; background: #cddbf5;
}
.tool { width: 32px; height: 32px; margin-top: 12px; }
.address {
  flex: none; width: 2383px; height: 56px; margin-left: -4px; background: #f6f8fc; border-radius: 28px;
  display: flex; align-items: center; padding: 0 22px 0 24px; font-family: Roboto, sans-serif; font-size: 28px; letter-spacing: .72px; color: #5f6368;
}
.lock { width: 18px; height: 24px; margin-right: 25px; }
.url { flex: 1; white-space: nowrap; }
.url-host { color: #1f2329; }
.addr-ic { width: 28px; height: 28px; }
.addr-ic.share { width: 24px; height: 30px; margin-right: 38px; }
.puzzle { margin-left: -5px; }
.panel { margin-left: -2px; }
.avatar {
  width: 44px; height: 44px; margin: 6px 0 0 -6px; border-radius: 50%; background: #5d4037; color: #fff;
  font-family: Roboto, sans-serif; font-size: 24px; text-align: center; line-height: 40px;
}
.dots { margin-left: -8px; }

.bookmarks {
  height: 64px; flex: none; display: flex; align-items: center; padding: 0 0 8px 28px; gap: 32.700px; background: #cddbf5;
  font-family: Roboto, sans-serif; font-size: 25.500px; color: #20242a; white-space: nowrap;
}
.bm { display: flex; align-items: center; gap: 16px; color: #20242a; }
.folder { width: 32px; height: 28px; }
.bi { width: 32px; height: 32px; }
.bm-more { margin-left: auto; margin-right: 38px; font-size: 28px; }

/* aws nav */
.awsnav {
  height: 84px; flex: none; display: flex; align-items: center; background: #232f3e; color: #fff; padding: 0 38px 0 35px;
  border-top: 2px solid #a3adba; border-bottom: 2px solid #414d5c;
}
.aws-logo { width: 66px; height: 46px; display: flex; flex-direction: column; align-items: center; }
.aws-word { font-family: "Liberation Sans", sans-serif; font-size: 38px; line-height: 30px; letter-spacing: -1px; }
.aws-smile { width: 66px; height: 16px; }
.nav-sep { width: 2px; height: 44px; background: #414d5c; flex: none; }
.awsnav > .nav-sep { margin: 0 34px 0 32px; }
.services { display: flex; align-items: center; gap: 16px; font-size: 23.500px; width: 172px; }
.grid9 { width: 32px; height: 32px; }
.aws-search {
  width: 1078px; height: 60px; display: flex; align-items: center; background: #16191f; border: 2px solid #879596; border-radius: 3px;
  padding: 0 18px 0 20px; font-size: 27.600px; color: #aab7b8;
}
.aws-search-ic { width: 28px; height: 28px; margin-right: 20px; }
.aws-search em { flex: 1; }
.aws-right { margin-left: auto; display: flex; align-items: center; gap: 33px; font-size: 23.700px; }
.nav-ic { width: 32px; height: 32px; }
.nav-menu { display: flex; align-items: center; gap: 12px; }
.caret-w { width: 0; height: 0; border-left: 9px solid transparent; border-right: 9px solid transparent; border-top: 12px solid #fff; }

/* body */
.body-row { flex: 1; min-height: 0; display: flex; background: #fff; }
.sidebar { width: 436px; flex: none; background: #fff; padding: 41px 0 0 60px; border-right: 2px solid #eaeded; font-family: "Liberation Sans", sans-serif; color: #444; overflow: hidden; }
.nav-item { display: block; height: 62px; line-height: 62px; font-size: 28px; color: #444; white-space: nowrap; }
.nav-ext { height: 74px; display: flex; align-items: flex-start; padding-top: 12px; gap: 18px; }
.nav-active { color: #f59a38; font-weight: 700; }
.ext-big { width: 44px; height: 38px; margin-top: 4px; }
.nav-section {
  width: 330px; height: 72px; padding-top: 33px; line-height: 32px; font-size: 24px; color: #545b64;
  border-bottom: 2px solid #e6e8e8; margin-bottom: 10px;
}
.side-scroll { width: 28px; flex: none; background: #fafafa; padding: 6px 6px 0; }
.side-thumb { width: 16px; height: 1082px; background: #c0c0c0; border-radius: 8px; }

.content { width: 2256px; flex: none; background: #f2f3f3; color: #16191f; }
.flash { display: flex; color: #fff; padding: 0 36px 0 24px; font-size: 27.060px; line-height: 44px; }
.flash-info { height: 139px; background: #3072b6; padding-top: 26px; box-shadow: 0 2px 2px rgba(0,0,0,.25); }
.flash-ok { height: 96px; background: #3f7f20; margin-top: 5px; padding-top: 25px; box-shadow: 0 2px 3px rgba(0,0,0,.25); }
.flash-ic { width: 32px; height: 32px; margin: 5px 16px 0 0; }
.flash-text { flex: 1; white-space: nowrap; }
.flash-text u { text-underline-offset: 3px; }
.flash-text .learn { margin-left: 7px; }
.ext-small { display: inline-block; width: 28px; height: 28px; vertical-align: -4px; }
.btn-feedback { width: 312px; height: 60px; margin-top: -8px; background: #fff; border: 2px solid #545b64; border-radius: 2px; color: #545b64; font-size: 27.400px; font-weight: 700; padding: 0 0 2px; }
.flash-x { width: 28px; height: 28px; margin: 8px 0 0 36px; }

.page { padding: 39px 79px 0 80px; }
.crumbs { display: flex; align-items: center; gap: 23px; height: 44px; font-size: 27.060px; color: #545b64; }
.crumbs a { color: #2a6ab8; }
.crumb-sep { width: 18px; height: 30px; }
.title-row { display: flex; align-items: baseline; gap: 16px; margin-top: 41px; height: 70px; }
h1 { font-size: 55px; font-weight: 400; line-height: 70px; color: #16191f; }
.info { color: #2a6ab8; font-size: 22.500px; font-weight: 700; }

.card { margin-top: 52px; background: #fafafa; box-shadow: 0 2px 2px rgba(84,91,100,.7), 0 0 2px rgba(0,28,36,.25); height: 411px; }
.card-head { display: flex; align-items: center; padding: 33px 41px 0 40px; height: 97px; }
h2 { font-size: 34px; font-weight: 700; line-height: 64px; color: #16191f; margin-bottom: 6px; }
.count { font-weight: 400; color: #687078; }
.card-head .info { margin: 2px 0 0 17px; }
.actions { margin-left: auto; display: flex; gap: 17px; }
.btn { height: 64px; border-radius: 2px; font-size: 26.500px; font-weight: 700; display: flex; align-items: center; justify-content: center; padding: 0; letter-spacing: .5px; }
.btn-normal { width: 322px; background: #fff; border: 2px solid #545b64; color: #545b64; gap: 15px; font-size: 27px; padding-right: 3px; }
.dl { width: 26px; height: 30px; }
.btn-disabled { width: 224px; background: #fff; border: 2px solid #d5dbdb; color: #aab7b8; gap: 20px; }
.btn-primary { width: 277px; background: #dd7a33; border: 0; color: #fff; }
.caret { width: 0; height: 0; border-left: 11px solid transparent; border-right: 11px solid transparent; border-top: 16px solid; }
.caret-dis { color: #aab7b8; }
.caret-dark { color: #545b64; }

.card-filter { display: flex; align-items: center; padding: 0 0 0 40px; margin-top: 24px; height: 64px; }
.find { width: 1296px; height: 64px; background: #fff; border: 2px solid #aab7b8; border-radius: 2px; display: flex; align-items: center; padding: 0 0 2px 16px; gap: 18px; font-size: 27.100px; color: #aab7b8; }
.find-ic { width: 28px; height: 32px; }
.select { width: 302px; height: 64px; margin-left: 20px; background: #fff; border: 2px solid #aab7b8; border-radius: 2px; display: flex; align-items: center; justify-content: space-between; padding: 0 20px 2px 16px; font-size: 27.100px; color: #16191f; }
.pager { display: flex; align-items: center; margin-left: 172px; gap: 37px; font-size: 28px; width: 158px; }
.pg { width: 20px; height: 32px; }
.prefs { height: 64px; border-left: 2px solid #eaeded; padding: 14px 0 0 23px; }
.gear { width: 34px; height: 34px; }

.table { margin-top: 33px; }
.tr { display: grid; grid-template-columns: 108px 500px 341px 244px 244px 244px 400px 17px; }
.th { height: 78px; background: #fafafa; border-top: 2px solid #eaeded; border-bottom: 2px solid #eaeded; font-size: 26.300px; font-weight: 700; color: #545b64; }
.td { height: 86px; background: #fff; border-bottom: 2px solid #eaeded; font-size: 27.100px; color: #16191f; }
.cell { display: flex; align-items: center; padding: 0 30px 0 41px; white-space: nowrap; }
.cell-end { padding: 0; }
.th .sep { position: relative; justify-content: space-between; }
.th .sep::before { content: ""; position: absolute; left: 0; top: 19px; width: 2px; height: 38px; background: #eaeded; }
.name-h { color: #16191f; }
.sort { width: 20px; height: 18px; }
.check { width: 28px; height: 28px; background: #fff; border: 2px solid #aab7b8; border-radius: 3px; }
.link { color: #2a6ab8; margin-left: -1px; }
.ok { color: #3f7f20; gap: 8px; }
.ok-ic { width: 32px; height: 32px; }
.num { justify-content: flex-end; padding: 0 41px 0 0; }
.prog { gap: 22px; font-size: 25.400px; color: #687078; }
.bar { width: 226px; height: 8px; background: #eaeded; border-radius: 3px; }
.hscroll { height: 28px; padding: 6px 0 0 7px; }
.hthumb { width: 1757px; height: 16px; background: #c0c0c0; border-radius: 8px; }

.rail { width: 160px; flex: none; display: flex; background: #fff; }
.rail-col { width: 80px; padding-top: 28px; display: flex; justify-content: center; }
.rail-left { border-right: 2px solid #eaeded; }
.rail-chev { width: 20px; height: 28px; }
.rail-info { width: 32px; height: 32px; }

/* footer */
.footer {
  height: 58px; flex: none; display: flex; align-items: center; background: #232f3e; padding: 2px 40px 0 41px;
  border-top: 2px solid #545b64; border-bottom: 2px solid #414d5c; font-size: 23.300px; white-space: nowrap;
}
.foot-white { color: #eaeded; }
.foot-grey { color: #95a5a6; }
.foot-feedback { margin-right: 50px; font-size: 22.800px; }
.ext-foot { width: 28px; height: 28px; margin-left: 6px; }
.foot-copy { margin-left: auto; }
.foot-privacy { margin-left: 60px; }
.foot-terms { margin-left: 51px; }
.foot-cookie { margin-left: 51px; font-size: 22.700px; }

/* dock */
.dock-wrap { flex: 1; padding: 4px 0 0 69px; }
.dock {
  width: 2744px; height: 102px; display: flex; gap: 19.700px; padding: 13px 0 0 13px;
  border: 2px solid rgba(255,255,255,.2); border-radius: 30px; background: rgba(255,255,255,.07);
}
.dk { width: 66px; height: 66px; flex: none; position: relative; }
.dk > svg { width: 100%; height: 100%; overflow: visible; }
.run { position: absolute; left: 29px; top: 76px; width: 8px; height: 8px; border-radius: 50%; background: #9c8cc0; }
.dk-sep { width: 2px; height: 76px; margin: 0 7px 0 8px; background: rgba(255,255,255,.3); flex: none; }
.dk-sep2 { margin: 0 15px 0 10px; }
.dk-doc { width: 49px; height: 78px; margin-top: -7px; }
.dk-mini { width: 25px; height: 25px; margin: 45px 0 0 53px; }
.dk-mini2 { margin-left: 41px; }
.dk-shot { width: 78px; height: 44px; margin: 11px -6px 0 -6px; }
.dk .shot-badge { position: absolute; width: 25px; height: 25px; right: 1px; top: 34px; }
.dk-trash { width: 58px; height: 75px; margin: -5px 0 0 1px; }
.t-sep { font: 700 12px "Liberation Sans", sans-serif; fill: #fff; }
.t-six { font: 400 38px "Liberation Sans", sans-serif; fill: #222; }
.t-tv { font: 400 28px "Liberation Sans", sans-serif; fill: #f4f4f4; }
.t-x { font: 700 18px "Liberation Sans", sans-serif; fill: #fff; }
.t-ij { font: 700 22px "Liberation Mono", monospace; fill: #fff; }
```
